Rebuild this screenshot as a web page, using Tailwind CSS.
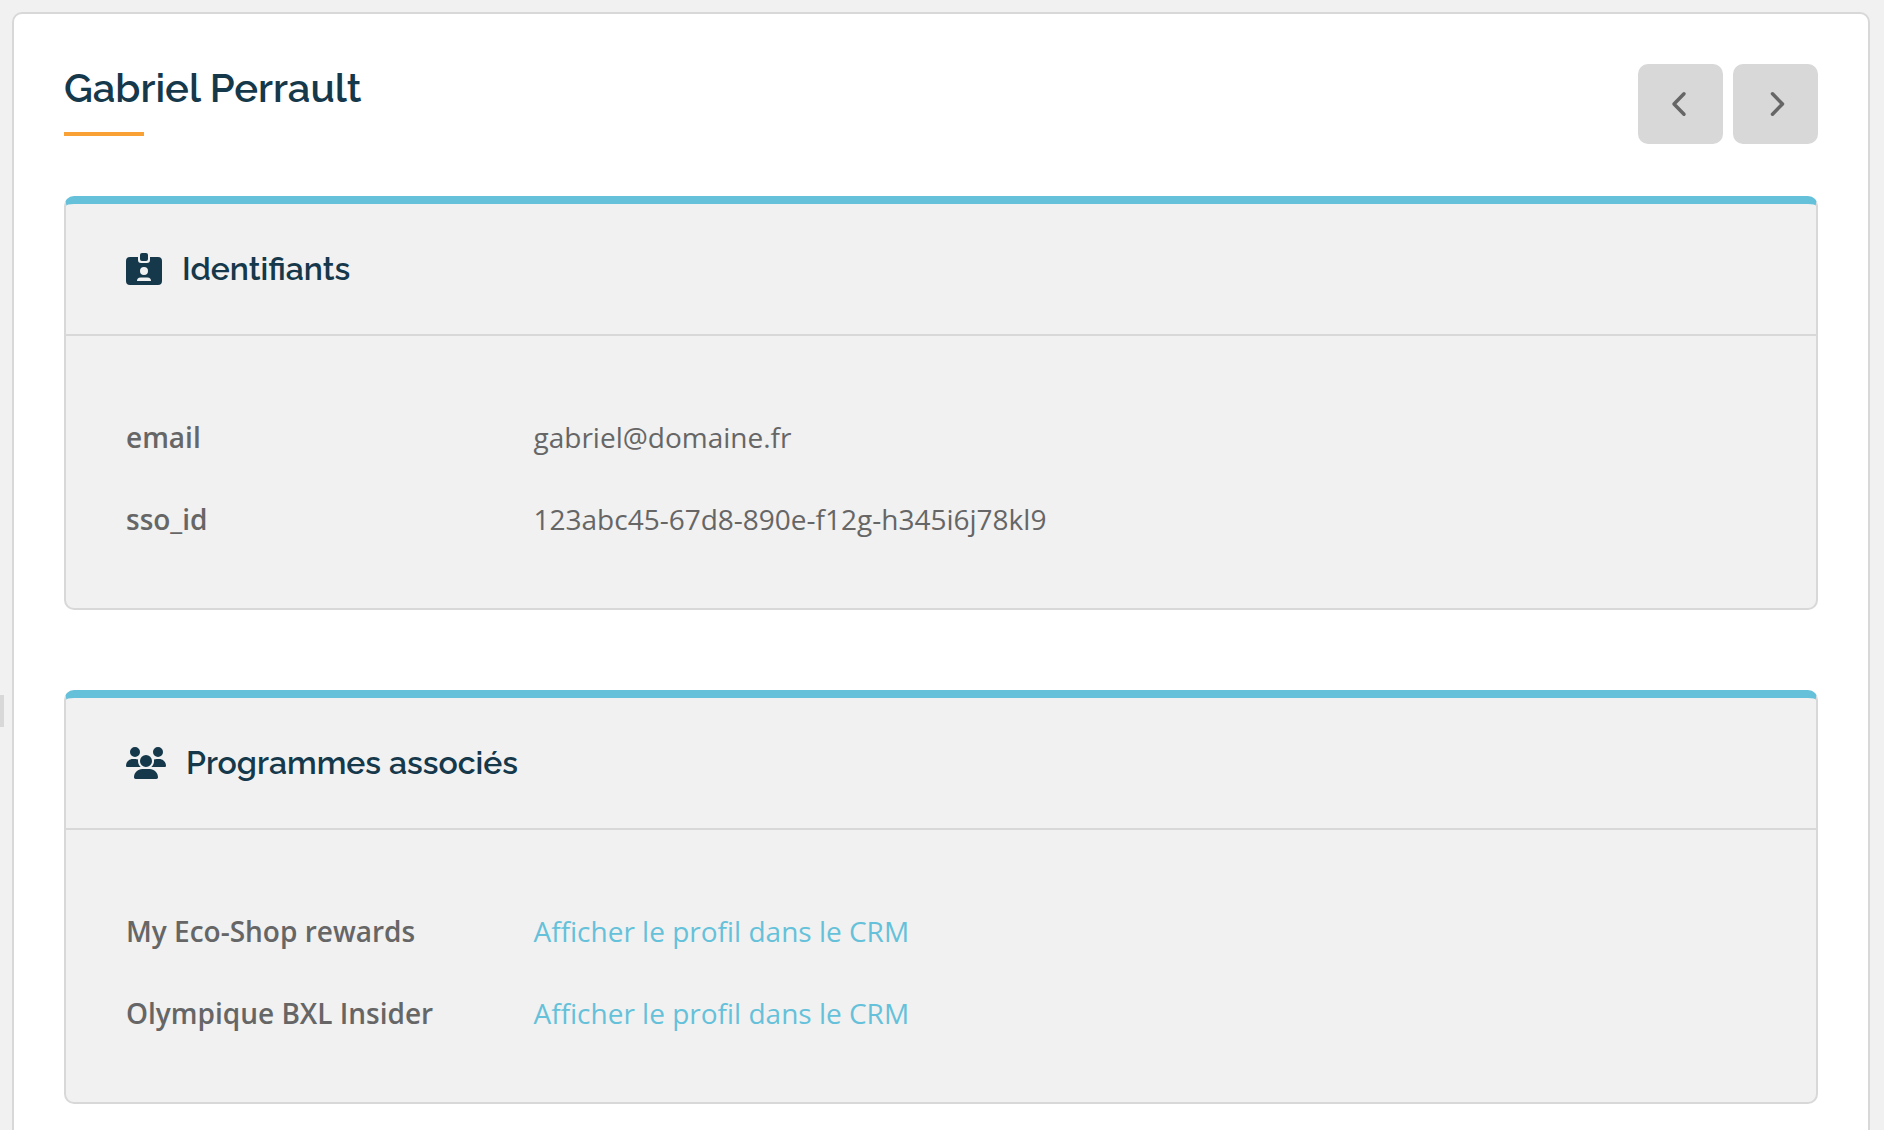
<!DOCTYPE html>
<html lang="fr">
<head>
  <meta charset="UTF-8" />
  <meta name="viewport" content="width=device-width, initial-scale=1.0"/>
  <title>Gabriel Perrault</title>
  <script src="https://cdn.jsdelivr.net/npm/@tailwindcss/browser@4"></script>
</head>
<body class="bg-[#f1f1f1] text-[#666666] font-['Open_Sans',sans-serif] text-[28px] leading-[42px]">

  <!-- Sidebar handle -->
  <div class="fixed left-0 top-[695px] w-1 h-8 bg-[#d8d8d8]"></div>

  <main class="mt-3 ml-3 mr-[14px] min-h-screen bg-white border-2 border-[#d8d8d8] rounded-[10px] p-[50px]">

    <header class="flex justify-between items-start mb-[52px]">
      <div>
        <h1 class="font-[Raleway,Lato,sans-serif] font-semibold text-[40px] leading-[48px] text-[#15384b]">Gabriel Perrault</h1>
        <div class="mt-5 w-20 h-1 bg-[#f9a135]"></div>
      </div>
      <div class="flex gap-[10px]">
        <button type="button" aria-label="Précédent" class="w-[85px] h-20 flex items-center justify-center bg-[#d8d8d8] rounded-[10px]">
          <svg class="w-5 h-8" viewBox="0 0 20 32" fill="none" stroke="currentColor" stroke-width="3.5" stroke-linecap="round" stroke-linejoin="round"><path d="M13 5.800L3 16L13 26.200"/></svg>
        </button>
        <button type="button" aria-label="Suivant" class="w-[85px] h-20 flex items-center justify-center bg-[#d8d8d8] rounded-[10px]">
          <svg class="w-5 h-8" viewBox="0 0 20 32" fill="none" stroke="currentColor" stroke-width="3.5" stroke-linecap="round" stroke-linejoin="round"><path d="M6.500 5.800L16.500 16L6.500 26.200"/></svg>
        </button>
      </div>
    </header>

    <!-- Identifiants -->
    <section class="mb-20 bg-[#f1f1f1] border-2 border-t-8 border-[#d8d8d8] border-t-[#65c1da] rounded-[10px]">
      <div class="flex items-center gap-5 h-[132px] px-[60px] border-b-2 border-[#d8d8d8] text-[#15384b]">
        <svg class="w-9 h-8" viewBox="0 0 36 32" fill="currentColor">
          <path fill-rule="evenodd" d="M4 4H12V7a3 3 0 0 0 3 3H21a3 3 0 0 0 3-3V4H32a4 4 0 0 1 4 4V28a4 4 0 0 1-4 4H4a4 4 0 0 1-4-4V8a4 4 0 0 1 4-4zM18 14a4 4 0 1 0 0 8a4 4 0 1 0 0-8zM14.500 24.500A3.500 3.500 0 0 0 11 28H25A3.500 3.500 0 0 0 21.500 24.500z"/>
          <rect x="14" y="0" width="8" height="8" rx="2"/>
        </svg>
        <h2 class="font-[Raleway,Lato,sans-serif] font-semibold text-[32px] leading-10">Identifiants</h2>
      </div>
      <dl class="px-[60px] pt-20 pb-[68px] space-y-10">
        <div class="flex">
          <dt class="w-1/4 font-semibold">email</dt>
          <dd>gabriel@domaine.fr</dd>
        </div>
        <div class="flex">
          <dt class="w-1/4 font-semibold">sso_id</dt>
          <dd>123abc45-67d8-890e-f12g-h345i6j78kl9</dd>
        </div>
      </dl>
    </section>

    <!-- Programmes -->
    <section class="bg-[#f1f1f1] border-2 border-t-8 border-[#d8d8d8] border-t-[#65c1da] rounded-[10px]">
      <div class="flex items-center gap-5 h-[132px] px-[60px] border-b-2 border-[#d8d8d8] text-[#15384b]">
        <svg class="w-10 h-8" viewBox="0 0 640 512" fill="currentColor"><path d="M144 0a80 80 0 1 1 0 160A80 80 0 1 1 144 0zM512 0a80 80 0 1 1 0 160A80 80 0 1 1 512 0zM0 298.700C0 239.800 47.800 192 106.700 192h42.700c15.900 0 31 3.500 44.600 9.700c-1.300 7.200-1.900 14.700-1.900 22.300c0 38.200 16.800 72.500 43.300 96H21.300C9.600 320 0 310.400 0 298.700zM405.300 320c26.600-23.500 43.300-57.800 43.300-96c0-7.600-.7-15-1.900-22.300c13.600-6.300 28.700-9.700 44.600-9.700h42C592.200 192 640 239.800 640 298.700c0 11.800-9.600 21.300-21.300 21.300H405.300zM224 224a96 96 0 1 1 192 0 96 96 0 1 1 -192 0zM128 485.300C128 411.700 187.700 352 261.300 352H378.700C452.300 352 512 411.700 512 485.300c0 14.700-11.900 26.700-26.700 26.700H154.700c-14.700 0-26.700-11.900-26.700-26.700z"/></svg>
        <h2 class="font-[Raleway,Lato,sans-serif] font-semibold text-[32px] leading-10">Programmes associés</h2>
      </div>
      <dl class="px-[60px] pt-20 pb-[68px] space-y-10">
        <div class="flex">
          <dt class="w-1/4 font-semibold">My Eco-Shop rewards</dt>
          <dd><a href="#" class="text-[#65c1da] hover:underline">Afficher le profil dans le CRM</a></dd>
        </div>
        <div class="flex">
          <dt class="w-1/4 font-semibold">Olympique BXL Insider</dt>
          <dd><a href="#" class="text-[#65c1da] hover:underline">Afficher le profil dans le CRM</a></dd>
        </div>
      </dl>
    </section>

  </main>

</body>
</html>
